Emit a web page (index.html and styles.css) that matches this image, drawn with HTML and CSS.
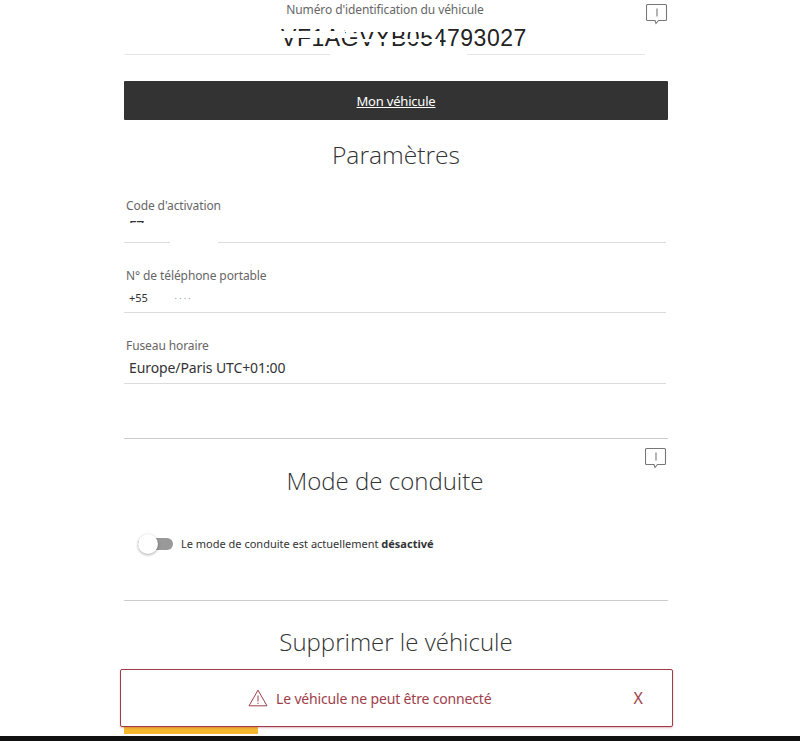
FILE: index.html
```html
<!DOCTYPE html>
<html lang="fr">
<head>
<meta charset="utf-8">
<title>Mon véhicule</title>
<link rel="stylesheet" href="styles.css">
</head>
<body>
<main class="page">
  <section class="vin">
    <div class="vin-main">
      <div class="field-label vin-label">Numéro d'identification du véhicule</div>
      <div class="vin-value">VF1AGVYB054793027<span class="mask mask-vin-a"></span><span class="mask mask-vin-b"></span><span class="mask mask-vin-c"></span></div>
      <div class="vin-line"><span class="mask mask-vin-line"></span></div>
    </div>
    <svg class="info" viewBox="0 0 22 22"><path d="M2.500 1.500h17a1 1 0 0 1 1 1v14a1 1 0 0 1-1 1h-7l-2.500 3-1-3h-7.500a1 1 0 0 1-1-1v-14a1 1 0 0 1 1-1z"/><path d="M11 5.500v8"/></svg>
  </section>

  <div class="bar"><a href="#" class="bar-link">Mon véhicule</a></div>

  <h2 class="title title-params">Paramètres</h2>

  <div class="field">
    <div class="field-label">Code d'activation</div>
    <div class="field-value field-code">F7y6m2a4b<span class="mask mask-code"></span><span class="mask mask-code-top"></span></div>
    <span class="mask mask-code-line"></span>
  </div>
  <div class="field">
    <div class="field-label">N° de téléphone portable</div>
    <div class="field-value small">+55<span class="dots">· · · ·</span></div>
  </div>
  <div class="field field-last">
    <div class="field-label">Fuseau horaire</div>
    <div class="field-value">Europe/Paris UTC+01:00</div>
  </div>

  <section class="drive">
    <svg class="info info-drive" viewBox="0 0 22 22"><path d="M2.500 1.500h17a1 1 0 0 1 1 1v14a1 1 0 0 1-1 1h-7l-2.500 3-1-3h-7.500a1 1 0 0 1-1-1v-14a1 1 0 0 1 1-1z"/><path d="M11 5.500v8"/></svg>
    <h2 class="title title-drive">Mode de conduite</h2>
    <div class="toggle-row">
      <span class="toggle"><span class="knob"></span></span>
      <span class="toggle-text">Le mode de conduite est actuellement <b>désactivé</b></span>
    </div>
  </section>

  <section class="remove">
    <h2 class="title title-remove">Supprimer le véhicule</h2>
    <div class="yellow"></div>
  </section>
</main>

<div class="alert">
  <div class="alert-msg">
    <svg class="warn" viewBox="0 0 20 18"><path d="M10 1.200 19 16.800H1z"/><path d="M10 6.500v6M10 13.700v1.300"/></svg>
    <span>Le véhicule ne peut être connecté</span>
  </div>
  <span class="alert-close">X</span>
</div>
<div class="footer"></div>
</body>
</html>
```

FILE: styles.css
```css
html, body {
  margin: 0;
  height: 741px;
  overflow: hidden;
  background: #fff;
  font-family: "Noto Sans", "Open Sans", sans-serif;
  color: #333;
}
.page {
  width: 544px;
  margin-left: 124px;
}
.vin {
  display: flex;
  align-items: flex-start;
  height: 81px;
}
.vin-main {
  position: relative;
  width: 520px;
  margin-left: 1px;
  text-align: center;
}
.vin-label {
  padding-top: 2px;
  line-height: 16px;
}
.vin-value {
  position: relative;
  height: 36px;
  padding-left: 38px;
  box-sizing: border-box;
  line-height: 40px;
  font-size: 23px;
  letter-spacing: 0.55px;
  font-family: "Liberation Sans", sans-serif;
  color: #222;
  white-space: nowrap;
  overflow: hidden;
}
.vin-line {
  position: relative;
  height: 1px;
  background: #e4e4e4;
}
.mask {
  position: absolute;
  background: #fff;
}
.mask-vin-a {
  left: 155px;
  top: 13px;
  width: 65px;
  height: 7px;
}
.mask-vin-b {
  left: 220px;
  top: 9px;
  width: 95px;
  height: 5px;
}
.mask-vin-c {
  left: 220px;
  top: 21px;
  width: 95px;
  height: 3px;
}
.mask-vin-line {
  left: 205px;
  top: -1px;
  width: 137px;
  height: 3px;
}
.mask-code {
  left: 3px;
  top: 8px;
  width: 90px;
  height: 15px;
}
.mask-code-top {
  left: 22px;
  top: 0;
  width: 70px;
  height: 9px;
}
.mask-code-line {
  left: 46px;
  bottom: -1px;
  width: 48px;
  height: 3px;
}
.info {
  width: 22px;
  height: 22px;
  margin: 3px 0 0 1px;
  fill: none;
  stroke: #777;
  stroke-width: 1.100;
  flex: none;
}
.bar {
  height: 39px;
  background: #333;
  border-radius: 1px;
  display: flex;
  align-items: center;
  justify-content: center;
}
.bar-link {
  color: #fff;
  font-size: 13px;
  letter-spacing: -0.2px;
  text-decoration: underline;
}
.title {
  margin: 0;
  font-family: "Open Sans", sans-serif;
  font-weight: 300;
  font-size: 24px;
  line-height: 32px;
  text-align: center;
  color: #333;
}
.title-params {
  margin-top: 19px;
  margin-bottom: 2px;
  font-size: 24.600px;
}
.field {
  position: relative;
  width: 542px;
  height: 70px;
  box-sizing: border-box;
  padding-left: 2px;
  border-bottom: 1px solid #ddd;
}
.field-last {
  height: 71px;
}
.field-label {
  font-size: 12px;
  line-height: 16px;
  letter-spacing: -0.1px;
  color: #666;
}
.field > .field-label {
  padding-top: 25px;
}
.field-value {
  position: relative;
  font-size: 14px;
  line-height: 22px;
  letter-spacing: -0.1px;
  margin-top: 4px;
  padding-left: 3px;
  color: #333;
}
.field-code {
  margin-top: 1px;
}
.field-last .field-value {
  margin-top: 3px;
}
.field-value.small {
  font-size: 11px;
  line-height: 20px;
}
.dots {
  margin-left: 27px;
  font-size: 9px;
  color: #999;
}
.drive {
  position: relative;
  margin-top: 54px;
  height: 163px;
  box-sizing: border-box;
  border-top: 1px solid #ccc;
  border-bottom: 1px solid #ccc;
}
.info-drive {
  position: absolute;
  top: 8px;
  right: 1px;
  margin: 0;
}
.title-drive {
  margin-top: 26px;
  padding-right: 22px;
}
.toggle-row {
  display: flex;
  align-items: center;
  gap: 8px;
  margin: 39px 0 0 14px;
}
.toggle {
  position: relative;
  display: block;
  width: 35px;
  height: 12px;
  border-radius: 6px;
  background: #999;
}
.knob {
  position: absolute;
  left: 0;
  top: -4px;
  width: 20px;
  height: 20px;
  border-radius: 50%;
  background: #fff;
  box-shadow: 0 1px 3px rgba(0, 0, 0, 0.35);
}
.toggle-text {
  font-size: 11px;
  color: #333;
}
.toggle-text b {
  font-weight: 700;
}
.remove {
  height: 134px;
}
.title-remove {
  margin-top: 25px;
}
.yellow {
  width: 134px;
  height: 50px;
  margin-top: 26px;
  background: #f5b82e;
}
.alert {
  position: absolute;
  left: 120px;
  top: 669px;
  width: 553px;
  height: 58px;
  box-sizing: border-box;
  display: flex;
  align-items: center;
  background: #fff;
  border: 1px solid #a03c46;
  border-radius: 2px;
  box-shadow: 0 1px 2px rgba(160, 60, 70, 0.35);
  color: #a0404a;
}
.alert-msg {
  display: flex;
  align-items: center;
  gap: 8px;
  margin-left: 127px;
  font-size: 14px;
  letter-spacing: -0.16px;
  flex: 1;
}
.warn {
  width: 20px;
  height: 18px;
  fill: none;
  stroke: #a0404a;
  stroke-width: 1;
}
.alert-close {
  margin-right: 29px;
  font-size: 16px;
}
.footer {
  position: absolute;
  left: 0;
  right: 0;
  top: 736px;
  height: 5px;
  background: #111;
}
```
